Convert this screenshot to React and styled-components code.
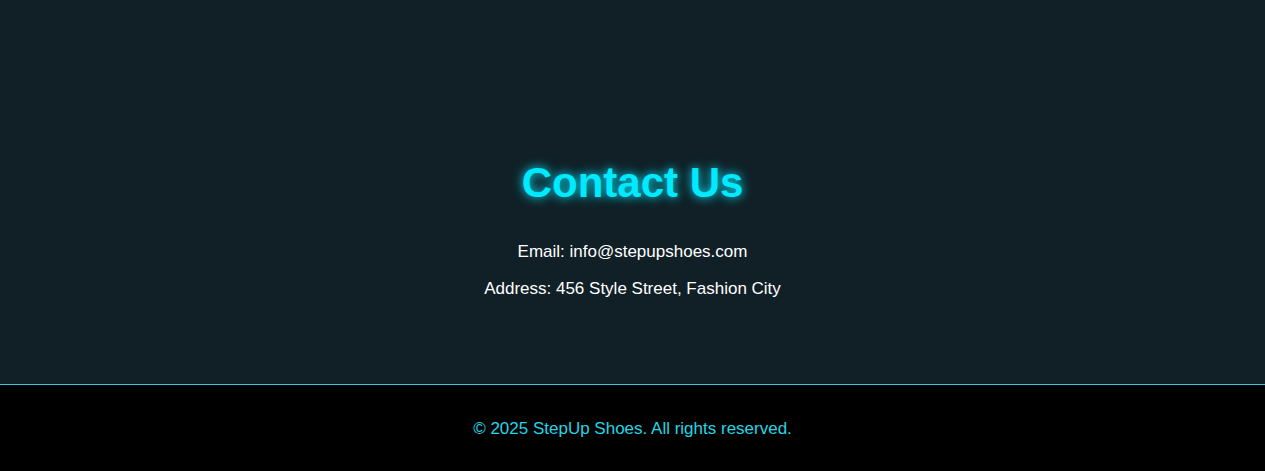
import React from "react";
import styled, { createGlobalStyle } from "styled-components";

const Global = createGlobalStyle`
  html, body { margin: 0; padding: 0; background: #000; }
  body { font-family: "Liberation Sans", Arial, sans-serif; }
`;

const Page = styled.div`
  display: flex;
  flex-direction: column;
  min-height: 471px;
`;

const Section = styled.section`
  background: #112027;
  height: 384px;
  box-sizing: border-box;
  padding-top: 160px;
  display: flex;
  flex-direction: column;
  align-items: center;
  text-align: center;
`;

const Title = styled.h2`
  margin: 0 0 36px;
  font-size: 42px;
  line-height: 46px;
  font-weight: 700;
  color: #00eaff;
  text-shadow: 0 0 8px rgba(0, 234, 255, 0.8), 0 0 14px rgba(0, 234, 255, 0.4);
`;

const Line = styled.p`
  margin: 0 0 ${(p) => (p.$last ? 0 : 17)}px;
  font-size: 17px;
  line-height: 20px;
  color: #ffffff;
`;

const Footer = styled.footer`
  background: #000;
  border-top: 1px solid #3ccbd6;
  padding: 34px 20px 32px;
  text-align: center;
`;

const Copy = styled.p`
  margin: 0;
  font-size: 17px;
  line-height: 20px;
  color: #22d6e6;
`;

export default function App() {
  return (
    <Page>
      <Global />
      <Section>
        <Title>Contact Us</Title>
        <Line>Email: info@stepupshoes.com</Line>
        <Line $last>Address: 456 Style Street, Fashion City</Line>
      </Section>
      <Footer>
        <Copy>© 2025 StepUp Shoes. All rights reserved.</Copy>
      </Footer>
    </Page>
  );
}
